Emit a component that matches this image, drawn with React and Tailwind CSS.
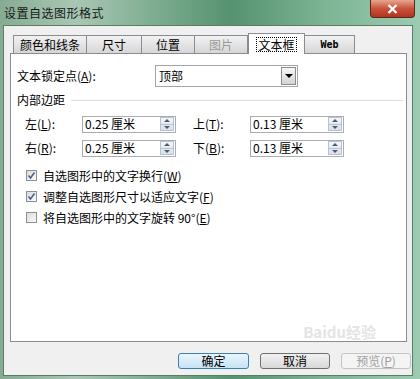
import React from "react";

const F = { fontFamily: '"Noto Sans CJK SC", "Liberation Sans", sans-serif' };

function U({ c }) {
  return <span className="underline">{c}</span>;
}

function Spin() {
  return (
    <div className="flex h-[14px] w-[14px] flex-col border border-[#b7c3d1] bg-gradient-to-b from-[#f4f6f9] to-[#d9e0ea]">
      <div className="flex flex-1 items-center justify-center">
        <div className="h-0 w-0 border-x-[3px] border-b-[3px] border-x-transparent border-b-[#4d5b6c]" />
      </div>
      <div className="h-px bg-[#b7c3d1]" />
      <div className="flex flex-1 items-center justify-center">
        <div className="h-0 w-0 border-x-[3px] border-t-[3px] border-x-transparent border-t-[#4d5b6c]" />
      </div>
    </div>
  );
}

function Field({ label, k, value }) {
  return (
    <div className="flex items-center">
      <div className="w-[57px] text-[12px] text-black">
        {label}(<U c={k} />):
      </div>
      <div className="flex h-[17px] w-[94px] items-center justify-between border border-[#abadb3] bg-white pl-[2px] pr-[1px]">
        <span className="text-[12px] leading-none text-black">{value}</span>
        <Spin />
      </div>
    </div>
  );
}

function Check({ checked, children }) {
  return (
    <div className="flex h-[21px] items-center">
      <div className="flex h-[11px] w-[11px] items-center justify-center border border-[#8f8f8f] bg-gradient-to-br from-[#dcdcdc] to-[#fafafa]">
        {checked && (
          <svg width="9" height="9" viewBox="0 0 9 9">
            <path d="M1.5 4.5 L3.5 7 L7.5 1.5" stroke="#4a5f97" strokeWidth="1.6" fill="none" />
          </svg>
        )}
      </div>
      <span className="ml-[6px] text-[12px] text-black">{children}</span>
    </div>
  );
}

function Tab({ w, children, selected, disabled, mono }) {
  if (selected) {
    return (
      <div
        className="relative z-10 -mb-px flex h-[21px] items-center justify-center border border-b-0 border-[#898c95] bg-white"
        style={{ width: w }}
      >
        <span className="border border-dotted border-black px-[1px] text-[12px] leading-[13px] text-black">{children}</span>
      </div>
    );
  }
  return (
    <div
      className="flex h-[18px] items-center justify-center border border-b-0 border-l-0 border-[#898c95] bg-gradient-to-b from-[#f2f2f2] to-[#d6d6d6] first:border-l"
      style={{ width: w }}
    >
      <span
        className={`text-[12px] ${disabled ? "text-[#9a9a9a]" : "text-black"}`}
        style={mono ? { fontFamily: '"DejaVu Sans Mono", monospace', fontSize: 10, fontWeight: 600 } : undefined}
      >
        {children}
      </span>
    </div>
  );
}

export default function App() {
  return (
    <div
      className="relative flex h-[379px] w-[420px] flex-col overflow-hidden bg-[linear-gradient(to_right,#86ab93_0%,#a9c7b4_18%,#77a88b_40%,#55926f_55%,#7db595_78%,#9ccbb2_100%)]"
      style={F}
    >
      {/* title bar */}
      <div className="relative flex h-[25px] shrink-0 items-center pl-[4px]">
        <span className="text-[12px] tracking-[0.5px] text-[#1a1a1a]">设置自选图形格式</span>
        <div className="absolute right-[5px] top-0 flex h-[18px] w-[45px] items-center justify-center rounded-b-[4px] border border-t-0 border-[#5a2a22] bg-gradient-to-b from-[#e8a58f] via-[#c9523a] to-[#b4331c]">
          <svg width="11" height="10" viewBox="0 0 11 10">
            <path d="M1.5 1 L9.5 9 M9.5 1 L1.5 9" stroke="#fff" strokeWidth="2.4" />
          </svg>
        </div>
      </div>

      {/* client area */}
      <div className="ml-[3px] mr-[7px] flex h-[351px] flex-col border border-[#5b7d68] bg-[#f0f0f0]">
        <div className="ml-[6px] mt-[7px] flex w-[397px] flex-col">
          {/* tabs */}
          <div className="ml-[3px] flex items-end">
            <Tab w={74}>颜色和线条</Tab>
            <Tab w={55}>尺寸</Tab>
            <Tab w={53}>位置</Tab>
            <Tab w={53} disabled>图片</Tab>
            <Tab w={57} selected>文本框</Tab>
            <Tab w={50} mono>Web</Tab>
          </div>
          {/* panel */}
          <div className="relative flex h-[289px] flex-col border border-[#898c95] bg-white pl-[6px]">
            <div className="mt-[11px] flex items-center">
              <div className="w-[138px] text-[12px] text-black">
                文本锁定点(<U c="A" />):
              </div>
              <div className="flex h-[22px] w-[143px] items-center justify-between border border-[#a5a5a5] bg-white pl-[3px] pr-[1px]">
                <span className="text-[12px] text-black">顶部</span>
                <div className="flex h-[18px] w-[15px] items-center justify-center border border-[#8c8c8c] bg-gradient-to-b from-[#f6f6f6] to-[#d4d4d4]">
                  <div className="h-0 w-0 border-x-[4px] border-t-[4px] border-x-transparent border-t-black" />
                </div>
              </div>
            </div>

            <div className="mt-[4px] flex items-center">
              <span className="text-[12px] text-black">内部边距</span>
              <div className="ml-[6px] mr-[3px] h-px flex-1 bg-[#dcdcdc]" />
            </div>

            <div className="ml-[8px] mt-[6px] flex flex-col gap-[6px]">
              <div className="flex items-center gap-[17px]">
                <Field label="左" k="L" value="0.25 厘米" />
                <Field label="上" k="T" value="0.13 厘米" />
              </div>
              <div className="flex items-center gap-[17px]">
                <Field label="右" k="R" value="0.25 厘米" />
                <Field label="下" k="B" value="0.13 厘米" />
              </div>
            </div>

            <div className="ml-[9px] mt-[8px] flex flex-col">
              <Check checked>
                自选图形中的文字换行(<U c="W" />)
              </Check>
              <Check checked>
                调整自选图形尺寸以适应文字(<U c="F" />)
              </Check>
              <Check>
                将自选图形中的文字旋转 90°(<U c="E" />)
              </Check>
            </div>

            <span className="pointer-events-none absolute bottom-[0px] right-[30px] text-[15px] font-bold leading-[18px] text-[#e4e4e4]">
              Baidu经验
            </span>
          </div>
        </div>

        {/* buttons */}
        <div className="mt-[11px] flex justify-end gap-[11px] pr-[1px]">
          <div className="flex h-[16px] w-[71px] items-center justify-center rounded-[3px] border border-[#3c7fb1] bg-gradient-to-b from-[#eaf6fd] to-[#c7e3f5]">
            <span className="text-[12px] text-black">确定</span>
          </div>
          <div className="flex h-[16px] w-[70px] items-center justify-center rounded-[3px] border border-[#707070] bg-gradient-to-b from-[#f2f2f2] to-[#d8d8d8]">
            <span className="text-[12px] text-black">取消</span>
          </div>
          <div className="flex h-[16px] w-[70px] items-center justify-center rounded-[3px] border border-[#c4c4c4] bg-[#f4f4f4]">
            <span className="text-[12px] text-[#a0a0a0]">
              预览(<U c="P" />)
            </span>
          </div>
        </div>
      </div>
    </div>
  );
}
